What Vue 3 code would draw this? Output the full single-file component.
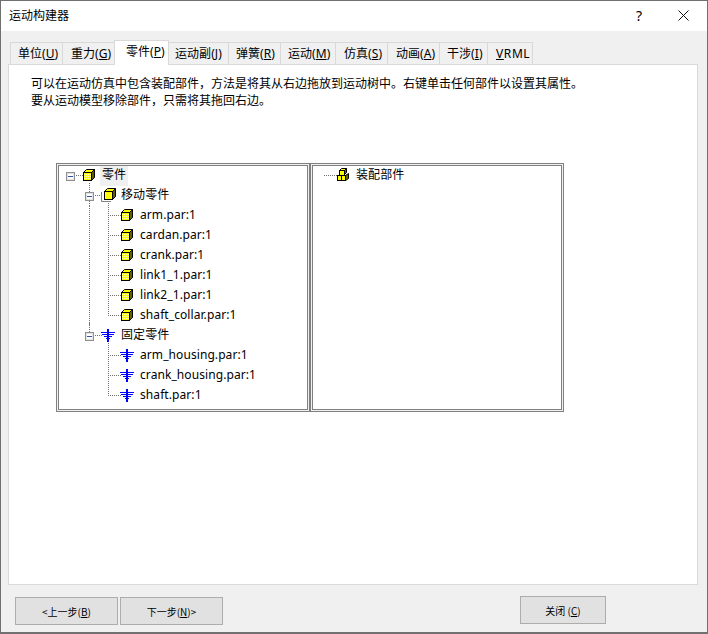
<script setup>
const tabs = [
  { label: '单位(', key: 'U', end: ')', w: 53, pad: 7 },
  { label: '重力(', key: 'G', end: ')', w: 53, pad: 8 },
  { label: '零件(', key: 'P', end: ')', w: 55, pad: 11, active: true },
  { label: '运动副(', key: 'J', end: ')', w: 61, pad: 6 },
  { label: '弹簧(', key: 'R', end: ')', w: 53, pad: 7 },
  { label: '运动(', key: 'M', end: ')', w: 56, pad: 7 },
  { label: '仿真(', key: 'S', end: ')', w: 53, pad: 8 },
  { label: '动画(', key: 'A', end: ')', w: 53, pad: 8 },
  { label: '干涉(', key: 'I', end: ')', w: 49, pad: 7 },
  { label: '', key: 'V', end: 'RML', w: 46, pad: 8, latin: true }
]
const rows = [
  { cells: ['exp-root'], icon: 'cube', text: '零件', selected: true },
  { cells: ['', 'exp-both'], icon: 'cube-box', text: '移动零件' },
  { cells: ['', 'v', 't'], icon: 'cube', text: 'arm.par:1' },
  { cells: ['', 'v', 't'], icon: 'cube', text: 'cardan.par:1' },
  { cells: ['', 'v', 't'], icon: 'cube', text: 'crank.par:1' },
  { cells: ['', 'v', 't'], icon: 'cube', text: 'link1_1.par:1' },
  { cells: ['', 'v', 't'], icon: 'cube', text: 'link2_1.par:1' },
  { cells: ['', 'v', 'l'], icon: 'cube', text: 'shaft_collar.par:1' },
  { cells: ['', 'exp-up'], icon: 'ground', text: '固定零件' },
  { cells: ['', '', 't'], icon: 'ground', text: 'arm_housing.par:1' },
  { cells: ['', '', 't'], icon: 'ground', text: 'crank_housing.par:1' },
  { cells: ['', '', 'l'], icon: 'ground', text: 'shaft.par:1' }
]
</script>

<template>
  <div class="window">
    <header class="titlebar">
      <span class="title">运动构建器</span>
      <span class="help">?</span>
      <svg class="close-x" width="11" height="11" viewBox="0 0 11 11">
        <path d="M0.5 0.5L10.5 10.5M10.5 0.5L0.5 10.5" stroke="#111" stroke-width="1" fill="none" />
      </svg>
    </header>

    <nav class="tabs">
      <div
        v-for="t in tabs"
        :key="t.key"
        class="tab"
        :class="{ active: t.active, latin: t.latin }"
        :style="{ width: t.w + 'px', paddingLeft: t.pad + 'px' }"
      >{{ t.label }}<u>{{ t.key }}</u>{{ t.end }}</div>
    </nav>

    <main class="panel">
      <p class="intro">可以在运动仿真中包含装配部件，方法是将其从右边拖放到运动树中。右键单击任何部件以设置其属性。<br />要从运动模型移除部件，只需将其拖回右边。</p>
      <div class="trees">
        <div class="tree-frame">
          <div class="tree">
            <div v-for="r in rows" :key="r.text" class="row">
              <span v-for="(c, i) in r.cells" :key="i" class="cell" :class="c"><i v-if="c.startsWith('exp')" class="box"></i></span>
              <span class="cell icon-cell">
                <svg v-if="r.icon !== 'ground'" width="16" height="15" viewBox="0 0 16 15" class="icon">
                  <defs>
                    <pattern id="stip" width="2" height="2" patternUnits="userSpaceOnUse">
                      <rect width="2" height="2" fill="#ffff00" />
                      <rect width="1" height="1" fill="#ffffa8" />
                    </pattern>
                  </defs>
                  <path v-if="r.icon === 'cube-box'" d="M0.5 4V13.5H10" stroke="#808080" fill="none" />
                  <g :transform="r.icon === 'cube-box' ? 'translate(2,-1)' : ''">
                    <path d="M1.5 4.5L4.5 1.5H12.5L9.5 4.5Z" fill="#ffff00" stroke="#000" />
                    <path d="M9.5 4.5L12.5 1.5V9.5L9.5 12.5Z" fill="#5f5f00" stroke="#000" />
                    <rect x="1.5" y="4.5" width="8" height="8" fill="url(#stip)" stroke="#000" />
                  </g>
                </svg>
                <svg v-else width="15" height="15" viewBox="0 0 15 15" class="icon">
                  <path d="M0 4.5H14M1 6.5H13M3 8.5H11M5 10.5H9" stroke="#0000ff" stroke-width="1" fill="none" />
                  <path d="M6 1H8V14H6Z" fill="#0000ff" />
                </svg>
              </span>
              <span class="label" :class="{ selected: r.selected }">{{ r.text }}</span>
            </div>
          </div>
        </div>
        <div class="tree-frame">
          <div class="tree">
            <div class="row">
              <span class="cell h-only"></span>
              <span class="cell icon-cell">
                <svg width="15" height="15" viewBox="0 0 15 15" class="icon">
                  <path d="M3.5 2.5L5.5 0.5H10.5L8.5 2.5Z" fill="#ffff33" stroke="#000" />
                  <path d="M8.5 2.5L10.5 0.5V4.5L8.5 6.5Z" fill="#6b6b00" stroke="#000" />
                  <rect x="3.5" y="2.5" width="5" height="5" fill="#ffff00" stroke="#000" />
                  <path d="M9.5 7.5L12.5 5.5V10.5L9.5 12.5Z" fill="#6b6b00" stroke="#000" />
                  <rect x="1.5" y="7.5" width="4" height="5" fill="#ffff00" stroke="#000" />
                  <rect x="5.5" y="7.5" width="4" height="5" fill="#ffff00" stroke="#000" />
                </svg>
              </span>
              <span class="label">装配部件</span>
            </div>
          </div>
        </div>
      </div>
    </main>

    <footer class="footer">
      <div class="nav-buttons">
        <button class="btn wide">&lt;上一步(<u>B</u>)</button>
        <button class="btn wide">下一步(<u>N</u>)&gt;</button>
      </div>
      <button class="btn close">关闭 (<u>C</u>)</button>
    </footer>
  </div>
</template>

<style>
html, body { margin: 0; background: #f0f0f0; }
</style>

<style scoped>
.window {
  box-sizing: border-box;
  width: 708px;
  height: 634px;
  display: flex;
  flex-direction: column;
  background: #f0f0f0;
  border: 1px solid #707070;
  border-bottom-width: 2px;
  font-family: "Noto Sans", "Noto Sans CJK SC", sans-serif;
  font-size: 12px;
  color: #000;
}
.titlebar {
  box-sizing: border-box;
  display: flex;
  align-items: center;
  height: 30px;
  flex: none;
  background: #fff;
  padding: 0 18px 2px 8px;
}
.title { flex: 1; }
.help { margin-right: 36px; font-size: 14px; }
.tabs {
  display: flex;
  align-items: flex-end;
  height: 33px;
  flex: none;
  padding-left: 9px;
  position: relative;
  z-index: 1;
}
.tab {
  box-sizing: border-box;
  height: 22px;
  margin-right: -1px;
  border: 1px solid #d9d9d9;
  border-bottom: none;
  background: #f0f0f0;
  line-height: 21px;
  white-space: nowrap;
  letter-spacing: 0.05px;
}
.tab.latin { letter-spacing: 0.6px; }
.tab u { text-underline-offset: 1px; }
.tab.active {
  height: 25px;
  margin-bottom: -1px;
  background: #fff;
  position: relative;
  z-index: 1;
}
.panel {
  flex: 1;
  margin: 0 9px 0 7px;
  background: #fff;
  border: 1px solid #d9d9d9;
  box-sizing: border-box;
  padding: 10px 0 0 22px;
  min-height: 0;
}
.intro {
  margin: 0;
  line-height: 17px;
}
.trees {
  display: flex;
  margin: 54px 0 0 25px;
}
.tree-frame {
  box-sizing: border-box;
  width: 254px;
  height: 249px;
  border: 1px solid #808080;
  padding: 1px;
  background: #f0f0f0;
}
.tree {
  box-sizing: border-box;
  height: 100%;
  border: 1px solid #808080;
  background: #fff;
  padding: 0 0 0 2px;
}
.row {
  display: flex;
  height: 20px;
  align-items: stretch;
}
.cell {
  position: relative;
  width: 19px;
  flex: none;
}
.icon-cell {
  display: flex;
  align-items: flex-start;
}
.icon { margin: 2px 0 0 2px; position: relative; z-index: 1; flex: none; }
.label {
  margin-left: 1px;
  padding: 0 2px 2px;
  line-height: 18px;
  white-space: nowrap;
  letter-spacing: 0.08px;
}
.label.selected { background: #f0f0f0; }

.v::before, .t::before, .l::before,
.exp-both::before, .exp-up::before {
  content: "";
  position: absolute;
  left: 9px;
  width: 1px;
  background: repeating-linear-gradient(to bottom, #707070 0 1px, transparent 1px 2px);
}
.v::before { top: 0; bottom: 0; }
.t::before { top: -3px; bottom: 0; }
.l::before { top: -3px; height: 13px; }
.exp-both::before { top: -3px; bottom: 0; }
.exp-up::before { top: -3px; height: 10px; }
.t::after, .l::after, .exp-root::after, .exp-both::after, .exp-up::after, .h-only::after {
  content: "";
  position: absolute;
  left: 9px;
  top: 9px;
  width: 13px;
  height: 1px;
  background: repeating-linear-gradient(to right, #707070 0 1px, transparent 1px 2px);
}
.box {
  position: absolute;
  z-index: 1;
  left: 5px;
  top: 6px;
  width: 7px;
  height: 7px;
  border: 1px solid #909090;
  background: #fff;
  box-shadow: inset 0 0 0 1px #e2e2e2;
}
.box::after {
  content: "";
  position: absolute;
  left: 1px;
  top: 3px;
  width: 5px;
  height: 1px;
  background: #3553a8;
}
.footer {
  box-sizing: border-box;
  display: flex;
  justify-content: space-between;
  align-items: flex-start;
  flex: none;
  height: 47px;
  padding: 11px 101px 0 14px;
}
.nav-buttons { display: flex; gap: 2px; margin-top: 1px; }
.btn {
  box-sizing: border-box;
  height: 28px;
  padding: 0;
  border: 1px solid #adadad;
  background: #e1e1e1;
  font-family: "Noto Sans CJK SC", sans-serif;
  font-size: 10px;
  color: #000;
}
.btn.wide { width: 103px; }
.btn.close { width: 86px; }
</style>
